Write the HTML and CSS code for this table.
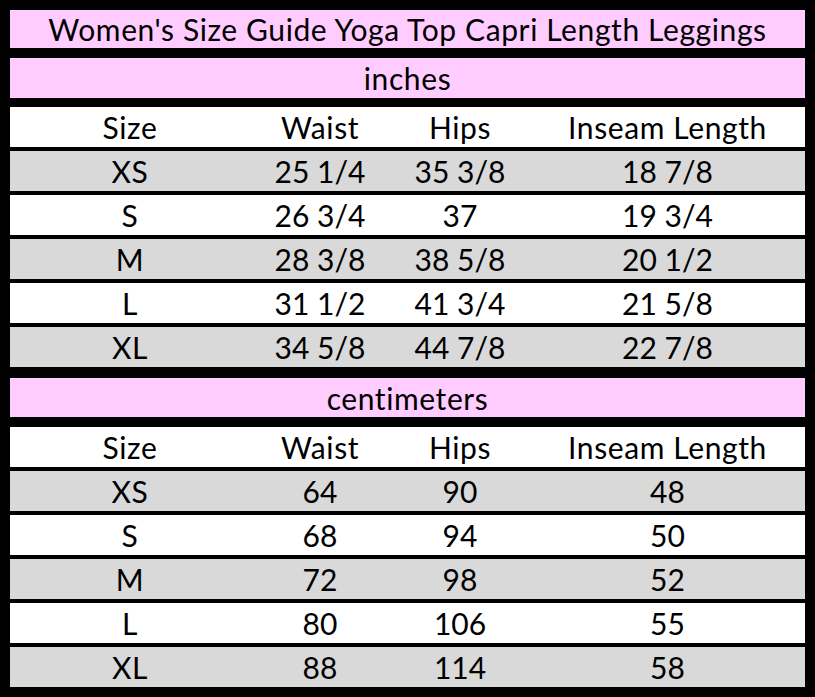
FILE: index.html
```html
<!DOCTYPE html>
<html>
<head>
<meta charset="utf-8">
<link rel="stylesheet" href="styles.css">
</head>
<body>
<div class="chart">
  <div class="band title">Women's Size Guide Yoga Top Capri Length Leggings</div>

  <div class="band unit first-unit">inches</div>
  <div class="row head first-head"><span>Size</span><span>Waist</span><span>Hips</span><span>Inseam Length</span></div>
  <div class="row gray"><span class="sz">XS</span><span>25 1/4</span><span>35 3/8</span><span>18 7/8</span></div>
  <div class="row"><span class="sz">S</span><span>26 3/4</span><span>37</span><span>19 3/4</span></div>
  <div class="row gray"><span class="sz">M</span><span>28 3/8</span><span>38 5/8</span><span>20 1/2</span></div>
  <div class="row"><span class="sz">L</span><span>31 1/2</span><span>41 3/4</span><span>21 5/8</span></div>
  <div class="row gray"><span class="sz">XL</span><span>34 5/8</span><span>44 7/8</span><span>22 7/8</span></div>

  <div class="band unit second-unit">centimeters</div>
  <div class="row head second-head"><span>Size</span><span>Waist</span><span>Hips</span><span>Inseam Length</span></div>
  <div class="row gray"><span class="sz">XS</span><span>64</span><span>90</span><span>48</span></div>
  <div class="row"><span class="sz">S</span><span>68</span><span>94</span><span>50</span></div>
  <div class="row gray"><span class="sz">M</span><span>72</span><span>98</span><span>52</span></div>
  <div class="row"><span class="sz">L</span><span>80</span><span>106</span><span>55</span></div>
  <div class="row gray"><span class="sz">XL</span><span>88</span><span>114</span><span>58</span></div>
</div>
</body>
</html>
```

FILE: styles.css
```css
html, body {
  margin: 0;
  padding: 0;
  background: #000;
}

.chart {
  width: 815px;
  height: 697px;
  box-sizing: border-box;
  padding: 10px;
  background: #000;
  display: flex;
  flex-direction: column;
  font-family: Lato, "Open Sans", sans-serif;
  font-size: 30px;
  color: #000;
}

.band {
  background: #ffccff;
  display: flex;
  align-items: center;
  justify-content: center;
  line-height: 1;
  letter-spacing: 0.6px;
}

.title {
  height: 38px;
}

.unit {
  height: 40px;
}

.first-unit {
  margin-top: 10px;
}

.second-unit {
  margin-top: 11px;
  height: 39px;
}

.row {
  height: 40px;
  margin-top: 4px;
  background: #fff;
  display: grid;
  grid-template-columns: 240px 140px 140px 275px;
  align-items: center;
  line-height: 1;
}

.row span {
  text-align: center;
}

.head span,
.row .sz {
  letter-spacing: 0.6px;
}

.row.gray {
  background: #d9d9d9;
}

.first-head {
  margin-top: 9px;
}

.second-head {
  margin-top: 10px;
}
```
